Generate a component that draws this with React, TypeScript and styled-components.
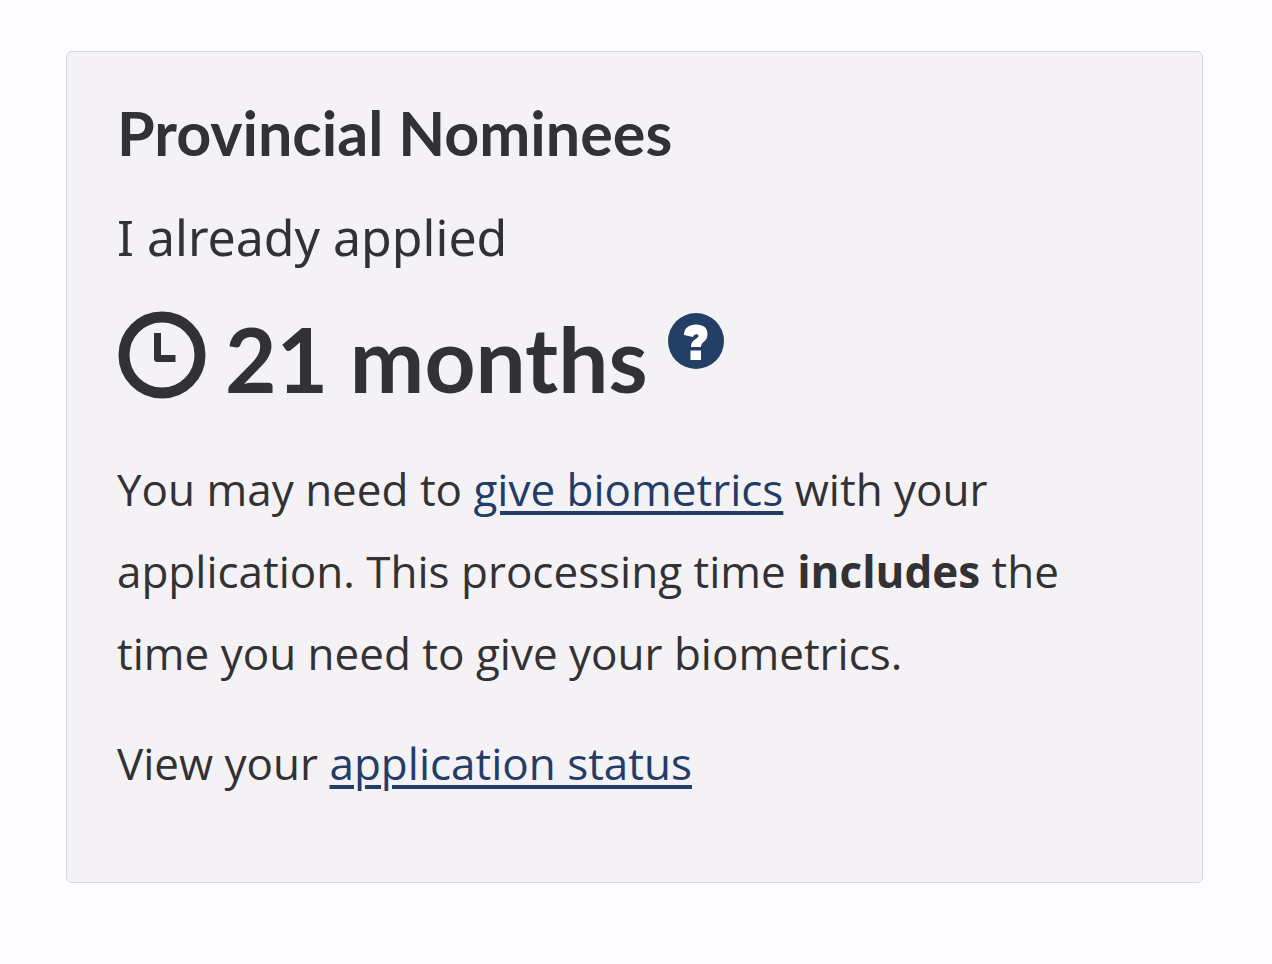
import React from "react";
import styled, { createGlobalStyle } from "styled-components";

const GlobalStyle = createGlobalStyle`
  *, *::before, *::after { box-sizing: border-box; }
  body {
    margin: 0;
    background: #fdfcfe;
    color: #323134;
    font-family: "Noto Sans", sans-serif;
  }
`;

const Page = styled.main`
  padding: 51px 69px 80px 66px;
`;

const Card = styled.section`
  padding: 50px;
  border: 1px solid #d8d7dc;
  border-radius: 6px;
  background: #f4f2f5;
`;

const Title = styled.h2`
  margin: 0;
  font: 700 61px/62px Lato, sans-serif;
`;

const Status = styled.p`
  margin: 41px 0 0;
  font-size: 50px;
  line-height: 64px;
`;

const Duration = styled.div`
  display: flex;
  align-items: flex-start;
  margin-top: 41px;
`;

const Months = styled.strong`
  margin: 0 20px 0 18px;
  font: 700 89px/98px Lato, sans-serif;
`;

const HelpButton = styled.button`
  display: block;
  margin-top: 3px;
  padding: 0;
  border: 0;
  border-radius: 50%;
  background: none;
  cursor: pointer;
`;

const Icon = styled.svg<{ $size: number }>`
  display: block;
  flex: none;
  width: ${({ $size }) => $size}px;
  height: ${({ $size }) => $size}px;
`;

const Details = styled.div`
  margin-top: 40px;
  font-family: "Open Sans", sans-serif;
  font-size: 44px;
  line-height: 82px;
`;

const Text = styled.p`
  margin: 0 0 28px;
`;

const Link = styled.a`
  color: #233c68;
  text-decoration: underline;
  text-decoration-thickness: 4px;
  text-underline-offset: 5px;
`;

export default function App() {
  return (
    <>
      <GlobalStyle />
      <Page>
        <Card>
          <Title>Provincial Nominees</Title>
          <Status>I already applied</Status>
          <Duration>
            <Icon $size={90} viewBox="0 0 90 90" fill="none" stroke="#323134" aria-hidden="true">
              <circle cx="45" cy="45" r="38" strokeWidth="11" />
              <path d="M40.5 23V48.5H58.5" strokeWidth="7" strokeLinejoin="round" />
            </Icon>
            <Months>21 months</Months>
            <HelpButton type="button" aria-label="Help with processing time">
              <Icon $size={56} viewBox="0 0 56 56" aria-hidden="true">
                <circle cx="28" cy="28" r="28" fill="#233f65" />
                <path d="M16 22C16 15 21 11.5 28 11.5C35.5 11.5 39.5 15 39.5 21C39.5 29 33 28.5 33 34H23C23 26 30.5 26 30.5 23C30.5 20.5 26 20.5 25 24Z" fill="#fff" />
                <path d="M22.5 37.5h10.5v9.5h-10.5z" fill="#fff" />
              </Icon>
            </HelpButton>
          </Duration>
          <Details>
            <Text>
              You may need to <Link href="#biometrics">give biometrics</Link> with your
              application. This processing time <strong>includes</strong> the time you need to give your biometrics.
            </Text>
            <Text>
              View your <Link href="#status">application status</Link>
            </Text>
          </Details>
        </Card>
      </Page>
    </>
  );
}
